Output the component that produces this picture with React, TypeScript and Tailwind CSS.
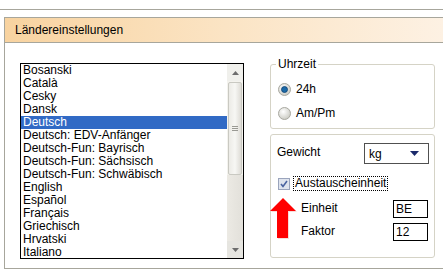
import React from "react";

const languages = [
  "Bosanski",
  "Català",
  "Cesky",
  "Dansk",
  "Deutsch",
  "Deutsch: EDV-Anfänger",
  "Deutsch-Fun: Bayrisch",
  "Deutsch-Fun: Sächsisch",
  "Deutsch-Fun: Schwäbisch",
  "English",
  "Español",
  "Français",
  "Griechisch",
  "Hrvatski",
  "Italiano",
];

const Radio = ({ checked }: { checked?: boolean }) => (
  <svg width="13" height="13" viewBox="0 0 13 13">
    <defs>
      <radialGradient id={checked ? "rOn" : "rOff"} cx="0.4" cy="0.35" r="0.7">
        <stop offset="0" stopColor="#ffffff" />
        <stop offset="1" stopColor="#c8c8c0" />
      </radialGradient>
    </defs>
    <circle cx="6.5" cy="6.5" r="6" fill={`url(#${checked ? "rOn" : "rOff"})`} stroke="#a8a8a0" />
    {checked && <circle cx="6.5" cy="6.5" r="3" fill="#1c6aa8" stroke="#0d3f6e" strokeWidth="0.8" />}
  </svg>
);

const ListBox = () => (
  <div className="flex w-[224px] h-[196px] border border-black bg-white">
    <div className="flex-1 flex flex-col">
      {languages.map((lang) => (
        <div
          key={lang}
          className={`h-[13px] leading-[13px] pl-[2px] text-[12px] ${lang === "Deutsch" ? "bg-[#316ac5] text-white" : "text-black"}`}
        >
          {lang}
        </div>
      ))}
    </div>
    {/* scrollbar */}
    <div className="w-[16px] flex flex-col bg-[#f4f3ee]">
      <div className="h-[17px] flex items-center justify-center bg-[#f0f0ec]">
        <svg width="7" height="4" viewBox="0 0 7 4">
          <path d="M0 4 L3.5 0 L7 4 Z" fill="#6d6d6d" />
        </svg>
      </div>
      <div className="h-[93px] mx-[1px] mt-[1px] rounded-[2px] border border-[#c9c9c2] bg-gradient-to-r from-[#ecebe6] via-[#f7f7f4] to-[#dedcd6] flex flex-col items-center justify-center gap-[1px]">
        <div className="w-[6px] h-[1px] bg-[#9a9a94]" />
        <div className="w-[6px] h-[1px] bg-[#9a9a94]" />
        <div className="w-[6px] h-[1px] bg-[#9a9a94]" />
      </div>
      <div className="flex-1 bg-gradient-to-r from-[#eceae4] to-[#e2e0da]" />
      <div className="h-[17px] flex items-center justify-center bg-[#e6e5e0]">
        <svg width="7" height="4" viewBox="0 0 7 4">
          <path d="M0 0 L3.5 4 L7 0 Z" fill="#6d6d6d" />
        </svg>
      </div>
    </div>
  </div>
);

const UpArrow = () => (
  <svg width="28" height="42" viewBox="0 0 28 42" className="absolute left-[-1px] top-[63px]">
    <path d="M13 0 L26 13 L18 13 L18 40 L7 40 L7 13 L0 13 Z" fill="#f2c4c0" opacity="0.6" transform="translate(1 1)" />
    <path d="M13 0 L26 13 L18 13 L18 40 L7 40 L7 13 L0 13 Z" fill="#ff0000" />
  </svg>
);

export default function App() {
  return (
    <div className="w-[443px] h-[276px] bg-white overflow-hidden text-black" style={{ fontFamily: '"Liberation Sans", Arial, sans-serif' }}>
      <div className="h-[9px]" />
      <div className="h-[1px] bg-[#a7a69c]" />
      <div className="h-[7px]" />
      <div className="ml-[4px] border-l border-[#a7a69c]">
        <div className="h-[26px] border-y border-[#a7a69c] bg-gradient-to-r from-[#f8d3a0] via-[#fbe4c4] to-[#fdf1e3] flex items-center pl-[10px] text-[12px]">
          Ländereinstellungen
        </div>
        <div className="h-[226px] border-b border-[#a7a69c] flex pl-[15px] pt-[20px]">
          <ListBox />
          <div className="ml-[26px] w-[165px] flex flex-col text-[12px]">
            <div className="relative h-[65px] mt-[1px] rounded-[3px] border border-[#d5d3c6] pl-[7px] pt-[15px] flex flex-col gap-[6px]">
              <span className="absolute left-[5px] top-[-8px] bg-white px-[2px] leading-[14px]">Uhrzeit</span>
              <div className="flex items-center gap-[5px] h-[18px]">
                <Radio checked />
                <span>24h</span>
              </div>
              <div className="flex items-center gap-[5px] h-[18px]">
                <Radio />
                <span>Am/Pm</span>
              </div>
            </div>
            <div className="relative mt-[5px] h-[124px] rounded-[3px] border border-[#d5d3c6] flex flex-col pl-[6px] pt-[8px]">
              <UpArrow />
              <div className="flex items-center">
                <span className="w-[87px] leading-[14px] mb-[3px]">Gewicht</span>
                <div className="w-[65px] h-[21px] border border-[#505050] flex items-center justify-between pl-[4px] pr-[9px]">
                  <span>kg</span>
                  <svg width="9" height="5" viewBox="0 0 9 5">
                    <path d="M0 0 L9 0 L4.5 5 Z" fill="#1b2a6b" />
                  </svg>
                </div>
              </div>
              <div className="flex items-center mt-[13px] ml-[1px]">
                <svg width="12" height="12" viewBox="0 0 12 12">
                  <rect x="0.5" y="0.5" width="11" height="11" fill="#dfe4ee" stroke="#9aa4bc" />
                  <path d="M3 6 L5 8.5 L9 3" fill="none" stroke="#4a63a0" strokeWidth="1.6" />
                </svg>
                <span className="ml-[4px] px-[1px] leading-[13px] outline outline-1 outline-dotted outline-black">Austauscheinheit</span>
              </div>
              <div className="ml-[24px] mt-[10px] flex flex-col gap-[5px]">
                <div className="flex items-center justify-between pr-[6px]">
                  <span className="leading-[14px] mb-[3px]">Einheit</span>
                  <div className="w-[35px] h-[18px] border border-black leading-[16px] pl-[2px]">BE</div>
                </div>
                <div className="flex items-center justify-between pr-[6px]">
                  <span className="leading-[14px] mb-[3px]">Faktor</span>
                  <div className="w-[35px] h-[18px] border border-black leading-[16px] pl-[2px]">12</div>
                </div>
              </div>
            </div>
          </div>
        </div>
      </div>
    </div>
  );
}
